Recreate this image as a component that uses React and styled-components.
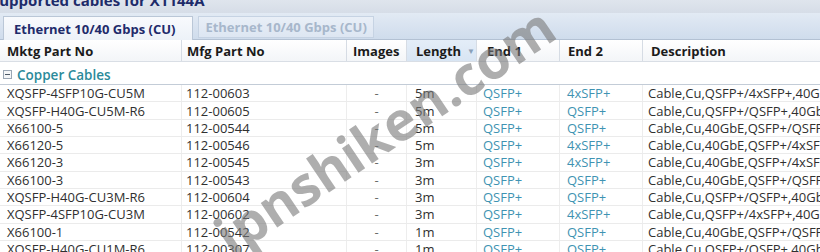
import React from "react";
import styled, { createGlobalStyle } from "styled-components";

const Global = createGlobalStyle`
  html, body { margin: 0; padding: 0; background: #ffffff; }
  body { font-family: "Open Sans", "Noto Sans", sans-serif; overflow: hidden; }
`;

const COLS = [
  { key: "mktg", label: "Mktg Part No", w: "182px", hp: 7, dp: 7 },
  { key: "mfg", label: "Mfg Part No", w: "165px", hp: 5, dp: 4 },
  { key: "img", label: "Images", w: "60px", hp: 6, dp: 0, center: true },
  { key: "len", label: "Length", w: "70px", hp: 9, dp: 8, sorted: true },
  { key: "end1", label: "End 1", w: "83px", hp: 10, dp: 6, link: true },
  { key: "end2", label: "End 2", w: "83px", hp: 8, dp: 7, link: true },
  { key: "desc", label: "Description", w: "1fr", hp: 8, dp: 5 },
];
const TEMPLATE = COLS.map((c) => c.w).join(" ");

const ROWS = [
  ["XQSFP-4SFP10G-CU5M", "112-00603", "-", "5m", "QSFP+", "4xSFP+", "Cable,Cu,QSFP+/4xSFP+,40Gb,5m"],
  ["XQSFP-H40G-CU5M-R6", "112-00605", "-", "5m", "QSFP+", "QSFP+", "Cable,Cu,QSFP+/QSFP+,40GbE,5m"],
  ["X66100-5", "112-00544", "-", "5m", "QSFP+", "QSFP+", "Cable,Cu,40GbE,QSFP+/QSFP+,5m"],
  ["X66120-5", "112-00546", "-", "5m", "QSFP+", "4xSFP+", "Cable,Cu,40GbE,QSFP+/4xSFP+,5m"],
  ["X66120-3", "112-00545", "-", "3m", "QSFP+", "4xSFP+", "Cable,Cu,40GbE,QSFP+/4xSFP+,3m"],
  ["X66100-3", "112-00543", "-", "3m", "QSFP+", "QSFP+", "Cable,Cu,40GbE,QSFP+/QSFP+,3m"],
  ["XQSFP-H40G-CU3M-R6", "112-00604", "-", "3m", "QSFP+", "QSFP+", "Cable,Cu,QSFP+/QSFP+,40GbE,3m"],
  ["XQSFP-4SFP10G-CU3M", "112-00602", "-", "3m", "QSFP+", "4xSFP+", "Cable,Cu,QSFP+/4xSFP+,40Gb,3m"],
  ["X66100-1", "112-00542", "-", "1m", "QSFP+", "QSFP+", "Cable,Cu,40GbE,QSFP+/QSFP+,1m"],
  ["XQSFP-H40G-CU1M-R6", "112-00307", "-", "1m", "QSFP+", "QSFP+", "Cable,Cu,QSFP+/QSFP+,40GbE,1m"],
];

const Page = styled.div`
  position: relative;
  width: 820px;
  height: 252px;
  overflow: hidden;
  background: #ffffff;
  display: flex;
  flex-direction: column;
`;

const TitleBar = styled.div`
  height: 13px;
  flex: none;
  overflow: hidden;
  background: linear-gradient(#dfe5ed, #d6dde7);
`;

const Title = styled.div`
  margin: -10px 0 0 -9px;
  font-size: 15px;
  line-height: 20px;
  font-weight: 700;
  color: #1d2b6a;
  white-space: nowrap;
`;

const TabStrip = styled.div`
  height: 27px;
  flex: none;
  box-sizing: border-box;
  display: flex;
  align-items: flex-end;
  gap: 5px;
  padding-left: 3px;
  background: linear-gradient(#e2eaf4, #cfdcec);
  border-bottom: 1px solid #b3c1d3;
`;

const Tab = styled.div`
  box-sizing: border-box;
  height: ${(p) => (p.$active ? "24px" : "22px")};
  margin-bottom: ${(p) => (p.$active ? "-1px" : "1px")};
  padding: 0 ${(p) => (p.$active ? "17px 0 10px" : "6px 0 6px")};
  display: flex;
  align-items: center;
  font-size: 13px;
  font-weight: 700;
  white-space: nowrap;
  color: ${(p) => (p.$active ? "#1f2b6b" : "#a7b7cb")};
  background: ${(p) =>
    p.$active ? "linear-gradient(#f8fafd, #edf2f8)" : "linear-gradient(#e9eff7, #dde6f2)"};
  border: 1px solid ${(p) => (p.$active ? "#bac7d7" : "#c6d3e3")};
  border-bottom: ${(p) => (p.$active ? "none" : "1px solid #c6d3e3")};
`;

const Grid = styled.div`
  display: grid;
  grid-template-columns: ${TEMPLATE};
`;

const HeaderRow = styled(Grid)`
  height: 22px;
  flex: none;
  background: linear-gradient(#ffffff, #f3f5f8);
  border-bottom: 1px solid #d9dee5;
  box-sizing: border-box;
`;

const HeadCell = styled.div`
  display: flex;
  align-items: center;
  gap: 6px;
  padding-left: ${(p) => p.$pad}px;
  font-size: 13px;
  font-weight: 700;
  color: #1b1b1b;
  white-space: nowrap;
  border-right: 1px solid #d6dce4;
  background: ${(p) => (p.$sorted ? "linear-gradient(#e4edf8, #d8e5f3)" : "transparent")};
  &:last-child { border-right: none; }
`;

const SortArrow = styled.span`
  font-size: 8px;
  color: #8aa0b8;
`;

const GroupRow = styled.div`
  height: 23px;
  flex: none;
  box-sizing: border-box;
  display: flex;
  align-items: center;
  gap: 5px;
  padding: 3px 0 0 3px;
  border-bottom: 1px solid #c3ccd7;
`;

const Toggle = styled.span`
  width: 9px;
  height: 9px;
  box-sizing: border-box;
  border: 1px solid #9aa6b4;
  background: #f4f6f8;
  display: flex;
  align-items: center;
  justify-content: center;
  &::before {
    content: "";
    width: 5px;
    height: 1px;
    background: #4c5866;
  }
`;

const GroupLabel = styled.span`
  font-size: 13.5px;
  font-weight: 600;
  color: #2b8a9a;
`;

const DataRow = styled(Grid)`
  height: 17.33px;
  box-sizing: border-box;
  border-bottom: 1px solid #ebebeb;
`;

const Cell = styled.div`
  display: flex;
  align-items: center;
  justify-content: ${(p) => (p.$center ? "center" : "flex-start")};
  padding-left: ${(p) => p.$pad}px;
  font-size: 13px;
  color: ${(p) => (p.$link ? "#3f93b2" : p.$center ? "#6a6a6a" : "#303030")};
  white-space: nowrap;
  overflow: hidden;
  border-right: 1px solid #ededed;
  &:last-child { border-right: none; }
`;

const Watermark = styled.div`
  position: absolute;
  left: 384px;
  top: 130px;
  transform: translate(-50%, -50%) rotate(-34deg);
  font-size: 54px;
  font-weight: 700;
  color: rgba(120, 120, 120, 0.6);
  white-space: nowrap;
  pointer-events: none;
`;

export default function App() {
  return (
    <Page>
      <Global />
      <TitleBar>
        <Title>Supported cables for X1144A</Title>
      </TitleBar>
      <TabStrip>
        <Tab $active>Ethernet 10/40 Gbps (CU)</Tab>
        <Tab>Ethernet 10/40 Gbps (CU)</Tab>
      </TabStrip>
      <HeaderRow>
        {COLS.map((c) => (
          <HeadCell key={c.key} $pad={c.hp} $sorted={c.sorted}>
            {c.label}
            {c.sorted && <SortArrow>▼</SortArrow>}
          </HeadCell>
        ))}
      </HeaderRow>
      <GroupRow>
        <Toggle />
        <GroupLabel>Copper Cables</GroupLabel>
      </GroupRow>
      {ROWS.map((r, i) => (
        <DataRow key={i}>
          {r.map((v, j) => (
            <Cell key={j} $pad={COLS[j].dp} $center={COLS[j].center} $link={COLS[j].link}>
              {v}
            </Cell>
          ))}
        </DataRow>
      ))}
      <Watermark>ipnshiken.com</Watermark>
    </Page>
  );
}
